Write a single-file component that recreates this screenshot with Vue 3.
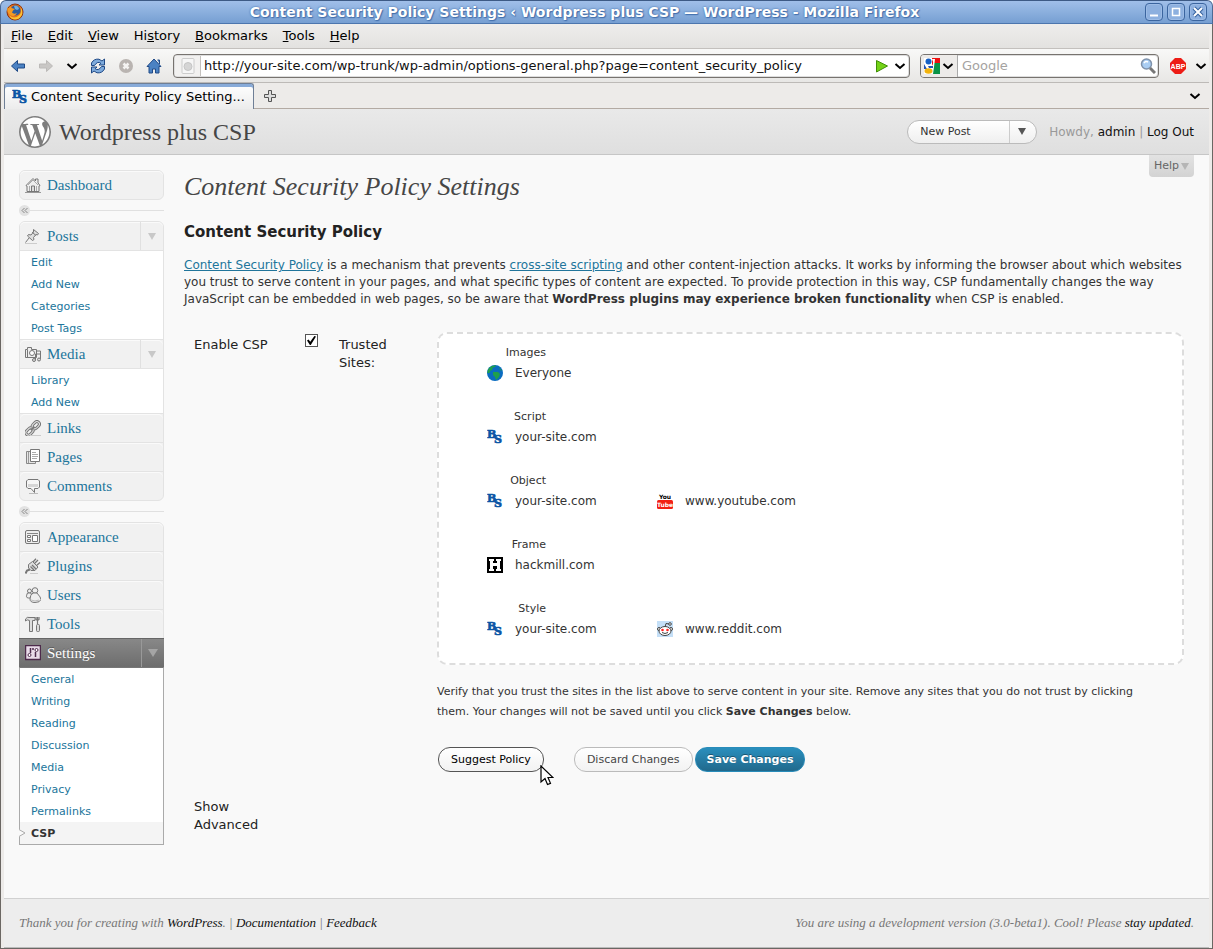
<script setup>
import { ref } from 'vue'

const bs = '<text x="0" y="9" font-family="DejaVu Serif" font-weight="bold" font-size="11" fill="#0b55a5" stroke="#0b55a5" stroke-width=".7">B</text><text x="7" y="14" font-family="DejaVu Serif" font-weight="bold" font-size="11" fill="#0b55a5" stroke="#0b55a5" stroke-width=".7">S</text>'

const icons = {
  bs,
  globe: '<circle cx="8" cy="8" r="8" fill="#0a6cc0"/><path d="M2 3Q5 0 9 .3L8 2 6 2.500 5 5 3 6 2.500 8 .3 8Q.2 5 2 3M6 7h5l2 2-1 3-3 3-1-3-2-2zM12 2l3 4-2-1z" fill="#1fa04c"/>',
  youtube: '<rect y="7" width="16" height="9" rx="1.500" fill="#f22015"/><text x="8" y="6" text-anchor="middle" font-family="DejaVu Sans" font-weight="bold" font-size="6" fill="#000">You</text><text x="8" y="14" text-anchor="middle" font-family="DejaVu Sans" font-weight="bold" font-size="6" fill="#fff">Tube</text>',
  hackmill: '<rect width="16" height="16" fill="#000"/><path d="M2 2h5v2H6v2h4V4H9V2h5v2h-1v8h1v2H9v-2h1V9H6v3h1v2H2v-2h1V4H2z" fill="#fff"/>',
  reddit: '<rect width="16" height="16" fill="#c4dff7"/><g stroke="#444" stroke-width="1"><path d="M8 6l1-3.500 3 .5" fill="none"/><circle cx="13" cy="3" r="1.300" fill="#fff"/><circle cx="2" cy="8" r="1.500" fill="#fff"/><circle cx="14" cy="8" r="1.500" fill="#fff"/><ellipse cx="8" cy="10" rx="6" ry="4.500" fill="#fff"/><path d="M5 11.500q3 2 6 0" fill="none"/></g><circle cx="5.500" cy="9" r="1.300" fill="#f22"/><circle cx="10.500" cy="9" r="1.300" fill="#f22"/>',
  dashboard: '<path d="M1 8.500L8 1.500l2.500 2.500V2H13v4l2 2.500-1 .5v5.500H2V9z" fill="#eee" stroke="#777"/><path d="M3 8l5-5 5 5M4.500 9v5M11.500 9v5" fill="none" stroke="#aaa"/><path d="M6.500 14V9h3v5" fill="#ddd" stroke="#777"/><path d="M0 15.500h16" stroke="#999"/>',
  posts: '<path d="M8.500 1.500l5 4-1 1.500-1.500-.5-2.500 3 .5 2-1.500 1-5-4.500 1-1.500 2.500.5 2.500-3z" fill="#ddd" stroke="#777"/><path d="M4 10l-3.500 4.500M7 4l4 3.500" stroke="#777" fill="none"/><path d="M0 15.500h12" stroke="#ccc"/>',
  media: '<path d="M.5 3.500h2v-2h4v2h5v8H.5z" fill="#eee" stroke="#777"/><circle cx="7" cy="7" r="2.500" fill="#fff" stroke="#777"/><path d="M2.500 4v7M11 5h4.500v8M10.500 8v6M10.500 8h5" fill="none" stroke="#777"/><circle cx="9" cy="14" r="1.500" fill="#ddd" stroke="#777"/><circle cx="14" cy="13.500" r="1.500" fill="#ddd" stroke="#777"/>',
  links: '<g transform="rotate(-45 8 8)" fill="none"><rect x="-1" y="5.500" width="8" height="5" rx="2.500" stroke="#777" stroke-width="3"/><rect x="8" y="5.500" width="8" height="5" rx="2.500" stroke="#777" stroke-width="3"/><rect x="-1" y="5.500" width="8" height="5" rx="2.500" stroke="#e5e5e5"/><rect x="8" y="5.500" width="8" height="5" rx="2.500" stroke="#e5e5e5"/><path d="M5 8h5" stroke="#777" stroke-width="2"/></g><path d="M5 15.500h11" stroke="#ccc"/>',
  pages: '<path d="M1.500 2.500h9v12h-9z" fill="#e5e5e5" stroke="#888"/><path d="M3.500 3v11" stroke="#999"/><path d="M5.500.5h9v12h-9z" fill="#fff" stroke="#777"/><path d="M7 3.500h4M7 5.500h6M7 7.500h6M7 9.500h5" stroke="#aaa"/>',
  comments: '<path d="M3 1.500h10l1.500 1.500v6L13 10.500H9.500v4L6 10.500H3L1.500 9V3z" fill="#f5f5f5" stroke="#777"/><path d="M3 6h10v3H3z" fill="#d5d5d5"/><path d="M4 15.500h9" stroke="#bbb"/>',
  appearance: '<rect x=".5" y="1.500" width="14" height="13" rx="1.500" fill="#eee" stroke="#777"/><path d="M2 4.500h11" stroke="#888"/><path d="M2.500 6.500h3v2h-3zM2.500 10.500h3v2h-3zM7.500 6.500h5v6h-5z" fill="#fff" stroke="#777"/>',
  plugins: '<path d="M7.500 3.500l5.500 5.500-3 3.500H6l-2.500-2.500V6.500z" fill="#ddd" stroke="#777"/><path d="M8 4L11 .8M11.500 7.500L15 4.500M9.500 5.500L13 2M7 7l4 4M5.500 8.500l3.500 3.500" stroke="#777" fill="none" stroke-width="1.300"/><path d="M5 11.500l-3 1-1.500 3" fill="none" stroke="#777" stroke-width="2"/><path d="M5 15.500h8" stroke="#ccc"/>',
  users: '<g fill="#eee" stroke="#777"><circle cx="4.500" cy="4" r="2"/><path d="M2.500 6Q0 11 3.500 11H7L6 6z"/><circle cx="10" cy="3.500" r="2.800"/><path d="M8 6q-3 2-3 6 0 3.500 5 3.500t6-3q0-2-4-6.500z"/></g><path d="M6 13q4 2 8 0" stroke="#bbb" fill="none"/>',
  tools: '<path d="M.5 3Q2 .5 5 1.500h5v3H7.500v11h-3v-11Q2 3 .5 5z" fill="#ddd" stroke="#777"/><path d="M12.500 1v7M11 1v2.500l1.500 1 1.500-1V1" fill="none" stroke="#777" stroke-width="1.200"/><rect x="11.500" y="8.500" width="3" height="7" rx="1" fill="#ddd" stroke="#777"/>',
  settings: '<rect x=".5" y=".5" width="15" height="14" fill="#e9dbe9" stroke="#4d2a4b" stroke-width="1.500"/><path d="M5.500 3v5M10.500 7v5" stroke="#4d2a4b" stroke-width="1.500"/><circle cx="4.500" cy="10" r="1.500" fill="#fff" stroke="#4d2a4b"/><circle cx="8" cy="4" r="1" fill="#4d2a4b"/><circle cx="11.500" cy="5" r="1.500" fill="#fff" stroke="#4d2a4b"/>'
}

const browserMenus = [['F', 'ile'], ['E', 'dit'], ['V', 'iew'], ['Hi', 's', 'tory'], ['B', 'ookmarks'], ['T', 'ools'], ['H', 'elp']].map(
  (p) => (p.length === 3 ? { pre: p[0], key: p[1], post: p[2] } : { pre: '', key: p[0], post: p[1] })
)

const groups = [
  [{ label: 'Dashboard', icon: 'dashboard' }],
  [
    { label: 'Posts', icon: 'posts', sub: ['Edit', 'Add New', 'Categories', 'Post Tags'] },
    { label: 'Media', icon: 'media', sub: ['Library', 'Add New'] },
    { label: 'Links', icon: 'links' },
    { label: 'Pages', icon: 'pages' },
    { label: 'Comments', icon: 'comments' }
  ],
  [
    { label: 'Appearance', icon: 'appearance' },
    { label: 'Plugins', icon: 'plugins' },
    { label: 'Users', icon: 'users' },
    { label: 'Tools', icon: 'tools' },
    {
      label: 'Settings', icon: 'settings', active: true, current: 'CSP',
      sub: ['General', 'Writing', 'Reading', 'Discussion', 'Media', 'Privacy', 'Permalinks', 'CSP']
    }
  ]
]

const policy = [
  { type: 'Images', sites: [{ icon: 'globe', name: 'Everyone' }] },
  { type: 'Script', sites: [{ icon: 'bs', name: 'your-site.com' }] },
  { type: 'Object', sites: [{ icon: 'bs', name: 'your-site.com' }, { icon: 'youtube', name: 'www.youtube.com' }] },
  { type: 'Frame', sites: [{ icon: 'hackmill', name: 'hackmill.com' }] },
  { type: 'Style', sites: [{ icon: 'bs', name: 'your-site.com' }, { icon: 'reddit', name: 'www.reddit.com' }] }
]

const enabled = ref(true)
const url = ref('http://your-site.com/wp-trunk/wp-admin/options-general.php?page=content_security_policy')
const query = ref('')
</script>

<template>
  <div class="window">
    <header class="titlebar">
      <svg class="i18" viewBox="0 0 18 18" aria-hidden="true">
        <circle cx="9" cy="9" r="8" fill="#e2711d" stroke="#8c3410" stroke-width="1" />
        <circle cx="9.500" cy="7.500" r="5" fill="#2d5c9e" />
        <path d="M8 3q4-1 5 3l-2 1-2-1z" fill="#6fb2e4" />
        <path d="M1.500 4L3 5.500 4 3l1.500 2L9 6 7 7.500 6 9.500Q7.500 11.500 11 10q-2 4-6 2.500Q0 10 1.500 4z" fill="#f59a23" />
        <path d="M3 12q5 5 10.500 0Q16 9 14.500 4 17 7 16.300 11 14 16.500 9 16.500 5 16.500 3 12z" fill="#fbc331" />
      </svg>
      <h1>Content Security Policy Settings ‹ Wordpress plus CSP — WordPress - Mozilla Firefox</h1>
      <div class="wbtns">
        <button aria-label="Minimize"><svg viewBox="0 0 16 16"><path d="M4 11.500h8" stroke="#fff" stroke-width="2" /></svg></button>
        <button aria-label="Maximize"><svg viewBox="0 0 16 16"><path d="M4.500 4.500h7v7h-7z" fill="none" stroke="#fff" stroke-width="1.500" /></svg></button>
        <button aria-label="Close"><svg viewBox="0 0 16 16"><path d="M4 4l8 8M12 4l-8 8" stroke="#35629f" stroke-width="4" /><path d="M4 4l8 8M12 4l-8 8" stroke="#fff" stroke-width="2" /></svg></button>
      </div>
    </header>

    <div class="frame">
      <nav class="menubar" aria-label="Browser menu">
        <button v-for="m in browserMenus" :key="m.key + m.post">{{ m.pre }}<u>{{ m.key }}</u>{{ m.post }}</button>
      </nav>

      <div class="toolbar">
        <div class="navbtns">
          <button aria-label="Back"><svg viewBox="0 0 16 16"><path d="M1.500 8l6-5.500V6h7v4h-7v3.500z" fill="#4b82c3" stroke="#204a87" stroke-linejoin="round" /></svg></button>
          <button aria-label="Forward"><svg viewBox="0 0 16 16"><path d="M14.500 8l-6-5.500V6h-7v4h7v3.500z" fill="#c9c7c5" stroke="#bcbab8" stroke-linejoin="round" /></svg></button>
          <button aria-label="Recent pages"><svg viewBox="0 0 16 16"><path d="M3.500 6L8 10l4.500-4" fill="none" stroke="#000" stroke-width="2" /></svg></button>
          <button aria-label="Reload"><svg viewBox="0 0 16 16"><g fill="#7fabdc" stroke="#204a87" stroke-linejoin="round"><path d="M1.500 7.500V5Q4 .5 9 1.200L12 3l2.500-2v6H9l1.800-1.800Q7.500 2.800 4.500 7.500z" /><path d="M14.500 8.500V11Q12 15.500 7 14.800L4 13l-2.500 2V9H7l-1.800 1.800Q8.500 13.200 11.500 8.500z" /></g></svg></button>
          <button aria-label="Stop"><svg viewBox="0 0 16 16"><circle cx="8" cy="8" r="7" fill="#b9b4b1" /><path d="M5.500 5.500l5 5M10.500 5.500l-5 5" stroke="#f4f3f2" stroke-width="2.500" /></svg></button>
          <button aria-label="Home"><svg viewBox="0 0 16 16"><path d="M8 1l7 7.500h-2V15H9.500v-4h-3v4H3V8.500H1zM11.500 2h2v4" fill="#4b82c3" stroke="#204a87" stroke-linejoin="round" /></svg></button>
        </div>
        <div class="urlbar">
          <span class="siteid"><svg viewBox="0 0 16 16" aria-hidden="true"><rect x="2" y=".5" width="12" height="15" rx="1" fill="#f6f6f6" stroke="#ccc" /><circle cx="8" cy="8.500" r="4" fill="#d5d5d5" stroke="#c5c5c5" /></svg></span>
          <input v-model="url" aria-label="Address" type="text" />
          <button aria-label="Go"><svg viewBox="0 0 16 16"><path d="M2.500 2.500L13.500 8l-11 6z" fill="#73d216" stroke="#3f8f06" stroke-linejoin="round" /></svg></button>
          <button aria-label="Address history"><svg viewBox="0 0 16 16"><path d="M3.500 6L8 10l4.500-4" fill="none" stroke="#000" stroke-width="2" /></svg></button>
        </div>
        <div class="search">
          <button class="engine" aria-label="Choose search engine">
            <svg viewBox="0 0 16 16"><path d="M8 0h8v8H8z" fill="#e11" /><path d="M9 5h7v11H9z" fill="#0a9447" /><rect y="0" width="8" height="16" fill="#fff" /><path d="M0 6v5h3z" fill="#2353b5" /><path d="M6 9q5-2 2-8h3l-1 8-1 7H7z" fill="#fff" /><circle cx="4.500" cy="3.500" r="3" fill="#1660c5" /><path d="M4 8h5v2H5z" fill="#2353b5" /><ellipse cx="4.500" cy="13" rx="4" ry="2.700" fill="#f2b20c" /></svg>
            <svg viewBox="0 0 16 16"><path d="M3.500 6L8 10l4.500-4" fill="none" stroke="#000" stroke-width="2" /></svg>
          </button>
          <input v-model="query" type="text" placeholder="Google" aria-label="Search" />
          <button aria-label="Search"><svg viewBox="0 0 16 16"><circle cx="6.500" cy="6" r="5" fill="#a9cdf3" stroke="#7f92ab" stroke-width="1.500" /><path d="M4 5q1.500-2.500 4-1" stroke="#fff" fill="none" stroke-width="1.500" /><path d="M10 10l5 5" stroke="#777" stroke-width="3" /></svg></button>
        </div>
        <button class="abp" aria-label="Adblock Plus"><svg viewBox="0 0 16 16"><path d="M5 0h6l5 5v6l-5 5H5l-5-5V5z" fill="#ed1c16" /><text x="8" y="11" text-anchor="middle" font-family="Liberation Sans" font-size="7" font-weight="bold" fill="#fff">ABP</text></svg></button>
        <button aria-label="Adblock menu"><svg viewBox="0 0 16 16"><path d="M3.500 6L8 10l4.500-4" fill="none" stroke="#000" stroke-width="2" /></svg></button>
      </div>

      <div class="tabs">
        <button class="tab">
          <svg viewBox="0 0 16 16" aria-hidden="true" v-html="icons.bs"></svg>
          <span>Content Security Policy Setting...</span>
        </button>
        <button class="newtab" aria-label="New tab"><svg viewBox="0 0 14 14"><path d="M5.500 1.500h3v4h4v3h-4v4h-3v-4h-4v-3h4z" fill="#ddd" stroke="#555" /></svg></button>
        <button class="alltabs" aria-label="List all tabs"><svg viewBox="0 0 16 16"><path d="M3.500 6L8 10l4.500-4" fill="none" stroke="#000" stroke-width="2" /></svg></button>
      </div>

      <div class="page">
        <header class="wphead">
          <svg class="wplogo" viewBox="0 0 24 24" aria-hidden="true"><circle cx="12" cy="12" r="12" fill="#fff" /><path fill="#7d7d7d" d="M21.469 6.825c.84 1.537 1.318 3.300 1.318 5.175 0 3.979-2.156 7.456-5.363 9.325l3.295-9.527c.615-1.540.820-2.771.820-3.864 0-.405-.026-.780-.070-1.110m-7.981.105c.647-.030 1.232-.105 1.232-.105.582-.075.514-.930-.067-.899 0 0-1.755.135-2.880.135-1.064 0-2.850-.150-2.850-.150-.585-.030-.661.855-.075.885 0 0 .540.061 1.125.090l1.680 4.605-2.370 7.080L5.354 6.900c.649-.030 1.234-.100 1.234-.100.585-.075.516-.930-.065-.896 0 0-1.746.138-2.874.138-.200 0-.438-.008-.690-.015C4.911 3.150 8.235 1.215 12 1.215c2.809 0 5.365 1.072 7.286 2.833-.046-.003-.091-.009-.141-.009-1.060 0-1.812.923-1.812 1.914 0 .890.513 1.643 1.060 2.531.411.720.890 1.643.890 2.977 0 .915-.354 1.994-.821 3.479l-1.075 3.585-3.900-11.610.001.014zM12 22.784c-1.059 0-2.081-.153-3.048-.437l3.237-9.406 3.315 9.087c.024.053.050.101.078.149-1.120.393-2.325.609-3.582.609M1.211 12c0-1.564.336-3.050.935-4.390L7.290 21.709C3.694 19.960 1.212 16.271 1.211 12M12 0C5.385 0 0 5.385 0 12s5.385 12 12 12 12-5.385 12-12S18.615 0 12 0" /></svg>
          <a class="blog" href="#">Wordpress plus CSP</a>
          <div class="fav"><button class="favmain">New Post</button><button class="favtog" aria-label="More actions"><i class="tri"></i></button></div>
          <p class="user">Howdy, <a href="#">admin</a> | <a href="#">Log Out</a></p>
        </header>

        <div class="body">
          <nav class="side" aria-label="Admin menu">
            <template v-for="(g, gi) in groups" :key="gi">
              <div v-if="gi" class="sep"><button aria-label="Collapse menu"><svg viewBox="0 0 11 11"><path d="M5.500 3L3 5.500 5.500 8M8.500 3L6 5.500 8.500 8" fill="none" stroke="#888" /></svg></button></div>
              <ul class="group">
                <li v-for="m in g" :key="m.label" class="menu" :class="{ active: m.active }">
                  <div class="top">
                    <a href="#"><svg viewBox="0 0 16 16" aria-hidden="true" v-html="icons[m.icon]"></svg>{{ m.label }}</a>
                    <button v-if="m.sub" :aria-label="'Toggle ' + m.label"><i class="tri"></i></button>
                  </div>
                  <ul v-if="m.sub" class="sub">
                    <li v-for="s in m.sub" :key="s" :class="{ current: s === m.current }">
                      <svg v-if="s === m.current" class="notch" viewBox="0 0 7 8" aria-hidden="true"><path d="M0 0L6 4 0 8z" fill="#f9f9f9" /><path d="M0 .5L6 4 0 7.500" fill="none" stroke="#aaa" /></svg>
                      <a href="#">{{ s }}</a>
                    </li>
                  </ul>
                </li>
              </ul>
            </template>
          </nav>

          <main>
            <button class="help">Help <i class="tri"></i></button>
            <h2>Content Security Policy Settings</h2>
            <h3>Content Security Policy</h3>
            <p class="intro">
              <a href="#">Content Security Policy</a> is a mechanism that prevents <a href="#">cross-site scripting</a> and other content-injection attacks. It works by informing the browser about which websites you trust to serve content in your pages, and what specific types of content are expected. To provide protection in this way, CSP fundamentally changes the way JavaScript can be embedded in web pages, so be aware that <b>WordPress plugins may experience broken functionality</b> when CSP is enabled.
            </p>
            <form class="form" @submit.prevent>
              <label class="lbl" for="enable">Enable CSP</label>
              <input id="enable" v-model="enabled" type="checkbox" />
              <span id="trusted" class="lbl2">Trusted Sites:</span>
              <div class="field">
                <div class="sites" role="group" aria-labelledby="trusted">
                  <section v-for="p in policy" :key="p.type">
                    <h4>{{ p.type }}</h4>
                    <div class="row">
                      <button v-for="s in p.sites" :key="s.name" type="button"><svg viewBox="0 0 16 16" aria-hidden="true" v-html="icons[s.icon]"></svg>{{ s.name }}</button>
                    </div>
                  </section>
                </div>
                <p class="note">Verify that you trust the sites in the list above to serve content in your site. Remove any sites that you do not trust by clicking them. Your changes will not be saved until you click <b>Save Changes</b> below.</p>
                <div class="actions">
                  <span class="hover">
                    <button class="btn dark" type="button">Suggest Policy</button>
                    <svg class="cursor" viewBox="0 0 14 21" aria-hidden="true"><path d="M1 1v16l4-3.500 2.500 6 3-1.200L8 12.500h5z" fill="#fff" stroke="#000" stroke-width="1.200" /></svg>
                  </span>
                  <button class="btn" type="button">Discard Changes</button>
                  <button class="btn primary" type="submit">Save Changes</button>
                </div>
              </div>
              <span class="lbl adv">Show Advanced</span>
            </form>
          </main>
        </div>

        <footer>
          <p>Thank you for creating with <a href="#">WordPress</a>. | <a href="#">Documentation</a> | <a href="#">Feedback</a></p>
          <p>You are using a development version (3.0-beta1). Cool! Please <a href="#">stay updated</a>.</p>
        </footer>
      </div>
    </div>
  </div>
</template>

<style>
body { background: #fff; }
</style>

<style scoped>
* { box-sizing: border-box; }
button { font: inherit; color: inherit; background: none; border: 0; padding: 0; margin: 0; text-align: left; }
a { color: inherit; text-decoration: none; }
ul { list-style: none; margin: 0; padding: 0; }
p, h1, h2, h3, h4 { margin: 0; }
svg { display: block; flex: none; width: 16px; height: 16px; }
.window { min-height: 100vh; display: flex; flex-direction: column; font: 13px/18px "DejaVu Sans", sans-serif; color: #000; }
.titlebar { height: 24px; display: flex; align-items: center; padding: 0 5px; border-top: 1px solid #3d5a85; border-bottom: 1px solid #4c76ae; border-radius: 6px 6px 0 0; background: linear-gradient(#a0bfe9, #769fd2); border-left: 1px solid #4c6a95; border-right: 1px solid #4c6a95; }
.titlebar .i18 { width: 18px; height: 18px; }
.titlebar h1 { flex: 1; text-align: center; font-size: 14px; line-height: 18px; color: #fff; text-shadow: 0 0 2px #2f5c9b, 1px 1px 1px #4a76b2; white-space: nowrap; }
.wbtns { display: flex; gap: 4px; }
.wbtns button { width: 18px; height: 18px; border: 1px solid #3b659f; border-radius: 4px; background: #8db0df; box-shadow: inset 0 0 0 1px #9dbce6; }
.frame { flex: 1; display: flex; flex-direction: column; padding: 0 3px; border: 1px solid #6b6763; border-top: 0; background: #edebe9; }
.menubar { height: 25px; display: flex; align-items: center; gap: 15px; padding-left: 7px; background: linear-gradient(#eeedec, #e3e2e0); border-bottom: 1px solid #c3c0bd; }
.toolbar { height: 34px; display: flex; align-items: center; padding: 0 0 0 6px; background: linear-gradient(#f8f8f7, #e8e7e5); border-bottom: 1px solid #bdbab7; }
.navbtns { display: flex; gap: 12px; padding-right: 11px; }
.navbtns button { width: 16px; }
.navbtns button:nth-child(3), .navbtns button:nth-child(4) { margin-left: -2px; }
.urlbar, .search { display: flex; align-items: center; height: 24px; border: 1px solid #77736f; border-radius: 4px; background: #fff; box-shadow: inset 0 0 0 1px #ddd; }
.urlbar { flex: 1; gap: 2px; padding-right: 1px; }
.siteid { width: 26px; height: 20px; padding: 2px 5px; margin-left: 1px; background: #f2f1f0; border-right: 1px solid #c4c1be; }
input[type='text'] { flex: 1; min-width: 0; border: 0; outline: 0; background: none; font: inherit; color: #111; padding: 0 0 0 1px; height: 20px; }
input::placeholder { color: #a5a3a1; opacity: 1; }
.search { width: 239px; margin-left: 10px; padding-right: 2px; }
.engine { display: flex; gap: 0; width: 37px; height: 22px; padding: 3px 3px; background: #edebe9; border-right: 1px solid #aaa; border-radius: 3px 0 0 3px; }
.search input[type='text'] { padding-left: 4px; }
.abp { margin: 0 7px 0 11px; }
.tabs { height: 26px; display: flex; align-items: flex-end; background: #edebe9; border-bottom: 1px solid #b3aaa3; }
.tab { display: flex; align-items: center; gap: 3px; width: 250px; height: 26px; margin-bottom: -1px; padding-left: 7px; background: linear-gradient(#fff, #ececec); border: 1px solid #6f7f96; border-bottom: 0; border-radius: 3px 3px 0 0; box-shadow: inset 0 3px 0 #88abd9; }
.tab span { white-space: nowrap; }
.newtab { align-self: center; margin-left: 9px; }
.newtab svg { width: 14px; height: 14px; }
.alltabs { align-self: center; margin: 0 6px 0 auto; }
.page { flex: 1; display: flex; flex-direction: column; background: #f9f9f9; color: #333; border-bottom: 1px solid #bbb; }
.wphead { display: flex; align-items: center; height: 46px; padding: 0 15px; background: linear-gradient(#e9e9e9, #dfdfdf); border-bottom: 1px solid #c6c6c6; }
.wplogo { width: 32px; height: 32px; }
.blog { font: 24px/30px "Liberation Serif", serif; color: #464646; margin-left: 8px; }
.fav { display: flex; margin-left: auto; width: 130px; height: 24px; border: 1px solid #bbb; border-radius: 12px; background: linear-gradient(#fff, #efefef); font-size: 11px; color: #333; }
.favmain { flex: 1; padding-left: 12px; border-right: 1px solid #ccc; }
.favtog { width: 26px; display: flex; align-items: center; justify-content: center; padding-right: 3px; }
.tri { display: inline-block; border: 4px solid transparent; border-top: 7px solid #c8c8c8; border-bottom: 0; }
.favtog .tri { border-top-color: #555; }
.user { font-size: 12px; color: #999; margin-left: 12px; white-space: nowrap; }
.user a { color: #111; }
.body { flex: 1; display: flex; align-items: flex-start; padding: 0 15px; gap: 20px; }
.side { width: 145px; flex: none; padding-top: 15px; }
.group { border: 1px solid #e3e3e3; border-radius: 6px; background: #f1f1f1; }
.sep { display: flex; align-items: center; height: 21px; }
.sep button { width: 11px; height: 11px; border-radius: 6px; background: #e2e2e2; }
.sep svg { width: 11px; height: 11px; }
.sep::after { content: ''; flex: 1; border-top: 1px solid #e0e0e0; }
.menu + .menu { border-top: 1px solid #e3e3e3; }
.top { display: flex; height: 28px; box-shadow: inset 0 1px 0 #fafafa; border-radius: 5px; }
.top a { flex: 1; display: flex; align-items: center; gap: 6px; padding-left: 5px; font: 15px/20px "Liberation Serif", serif; color: #21759b; }
.top button { width: 23px; display: flex; align-items: center; justify-content: center; border-left: 1px solid #e0e0e0; }
.sub { background: #fff; border-top: 1px solid #e3e3e3; }
.sub li { height: 22px; padding-left: 11px; font-size: 11px; line-height: 24px; color: #21759b; }
.active { margin: 0 -1px -1px; }
.menu.active { border-top-color: #666; }
.active .top { background: linear-gradient(#888, #6d6d6d); border-radius: 0; box-shadow: none; padding: 0 0 0 1px; }
.active .top a { color: #fff; text-shadow: 0 -1px 0 #555; }
.active .top button { border-left-color: #999; }
.active .top .tri { border-width: 5px; border-top: 8px solid #a5a5a5; border-bottom: 0; }
.active .sub { border: 1px solid #aaa; border-top-color: #777; }
.sub .current { position: relative; background: #f4f4f4; color: #333; font-weight: bold; }
.notch { position: absolute; left: -1px; top: 7px; width: 7px; height: 8px; }
main { flex: 1; min-width: 0; padding-bottom: 64px; }
.help { float: right; display: flex; align-items: center; gap: 2px; height: 22px; padding: 0 5px; font-size: 11px; color: #666; background: linear-gradient(#e2e2e2, #d3d3d3); border-radius: 0 0 4px 4px; }
.help .tri { border-top-color: #b5b5b5; }
h2 { padding-top: 14px; font: italic 26px/36px "Liberation Serif", serif; color: #464646; }
h3 { margin-top: 17px; font-size: 15px; line-height: 20px; color: #222; }
.intro { margin-top: 15px; font-size: 12px; line-height: 17px; }
.intro a { color: #21759b; text-decoration: underline; }
.form { display: grid; grid-template-columns: 121px 34px 98px 1fr; margin-top: 24px; padding-right: 10px; align-items: start; color: #222; }
.lbl { padding: 4px 0 0 10px; }
.lbl2 { padding: 4px 34px 0 0; }
.adv { grid-column: 1; margin-top: 22px; padding: 4px 40px 0 10px; }
#enable { appearance: none; width: 13px; height: 13px; margin: 2px 0 0; border: 1px solid #555; background: #fff; display: grid; place-items: center; }
#enable:checked::before { content: ''; width: 9px; height: 9px; background: #000; clip-path: polygon(0 50%, 18% 38%, 36% 64%, 82% 0, 100% 6%, 42% 100%, 32% 100%); }
.field { min-width: 0; }
.sites { padding: 9px 0 24px 48px; border: 2px dashed #ddd; border-radius: 10px; background: #fff; }
.sites section + section { margin-top: 24px; }
h4 { width: 59px; text-align: right; font-weight: normal; font-size: 11px; line-height: 20px; color: #333; }
.row { display: flex; height: 20px; font-size: 12px; color: #333; }
.row button { display: flex; align-items: center; gap: 12px; width: 170px; }
.note { margin-top: 17px; padding-right: 20px; font-size: 11px; line-height: 20px; color: #333; }
.actions { display: flex; margin-top: 25px; gap: 2px; }
.hover { position: relative; margin: 0 28px 0 1px; }
.btn { height: 25px; padding: 0 12px; border: 1px solid #bbb; border-radius: 12px; background: linear-gradient(#fff, #f2f2f2); font-size: 11px; color: #464646; white-space: nowrap; }
.dark { border-color: #555; color: #000; }
.primary { padding: 0 11px; border-color: #298cba; background: linear-gradient(#2a8fbd, #21698c); color: #fff; font-weight: bold; text-shadow: 0 -1px 0 #1b5570; }
.cursor { position: absolute; left: 102px; top: 18px; width: 14px; height: 21px; }
footer { display: flex; justify-content: space-between; align-items: center; height: 49px; padding: 0 15px; border-top: 1px solid #d1d1d1; background: #ededed; font: italic 13px/18px "Liberation Serif", serif; color: #777; }
footer a { color: #111; }
</style>
